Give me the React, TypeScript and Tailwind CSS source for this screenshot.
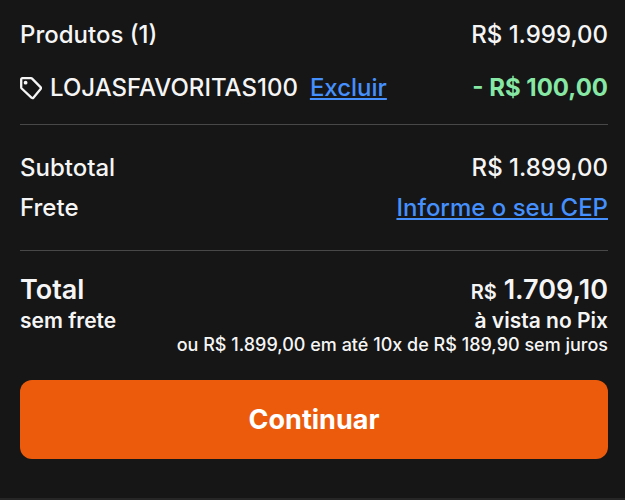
function TagIcon() {
  return (
    <svg
      className="mr-2 h-[23px] w-[22px]"
      viewBox="0 0 22 23"
      fill="none"
      stroke="currentColor"
      strokeWidth="2.3"
      strokeLinejoin="round"
      aria-hidden="true"
    >
      <path d="M1.200 2.400C1.200 1.600 1.600 1.200 2.400 1.200H11c.5 0 .8.1 1.100.4l8.400 8.500c.6.6.6 1.200.1 1.800l-7.200 8.800c-.5.6-1.200.6-1.700.1L1.700 11.500c-.3-.3-.5-.6-.5-1Z" />
      <circle cx="5.600" cy="5.700" r="1.900" fill="currentColor" stroke="none" />
    </svg>
  );
}

export default function App() {
  return (
    <div className="min-h-screen bg-[#161616] border-b-2 border-[#262626] pl-5 pr-[17px] pt-[21px] pb-9 font-['Inter',sans-serif] font-medium text-[#f5f5f5] text-[24px] leading-7">
      <section className="border-b border-[#484848] pb-[22px]">
        <div className="flex items-center justify-between">
          <span>Produtos (1)</span>
          <span>R$ 1.999,00</span>
        </div>
        <div className="mt-[25px] flex items-center justify-between">
          <div className="flex items-center">
            <TagIcon />
            <span>LOJASFAVORITAS100</span>
            <a href="#" className="ml-3 text-[#4590fc] underline">Excluir</a>
          </div>
          <span className="font-bold text-[#86e8a4]">- R$ 100,00</span>
        </div>
      </section>

      <section className="border-b border-[#484848] pt-[29px] pb-7">
        <div className="flex items-center justify-between">
          <span>Subtotal</span>
          <span>R$ 1.899,00</span>
        </div>
        <div className="mt-3 flex items-center justify-between">
          <span>Frete</span>
          <a href="#" className="text-[#4590fc] underline">Informe o seu CEP</a>
        </div>
      </section>

      <section className="grid grid-cols-[auto_1fr] pt-[23px] font-semibold">
        <p className="text-[27px] leading-8">Total</p>
        <p className="text-right text-[27px] leading-8">
          <span className="text-[20px] leading-none">R$</span> 1.709,10
        </p>
        <p className="text-[21px] leading-[30px]">sem frete</p>
        <p className="text-right text-[21px] leading-[30px]">à vista no Pix</p>
        <p className="col-span-2 text-right text-[18px] leading-[18px] font-medium">
          ou R$ 1.899,00 em até 10x de R$ 189,90 sem juros
        </p>
      </section>

      <button type="button" className="mt-[26px] h-[79px] w-full rounded-xl bg-[#ec5b0c] text-[27px] font-bold text-white">
        Continuar
      </button>
    </div>
  );
}
